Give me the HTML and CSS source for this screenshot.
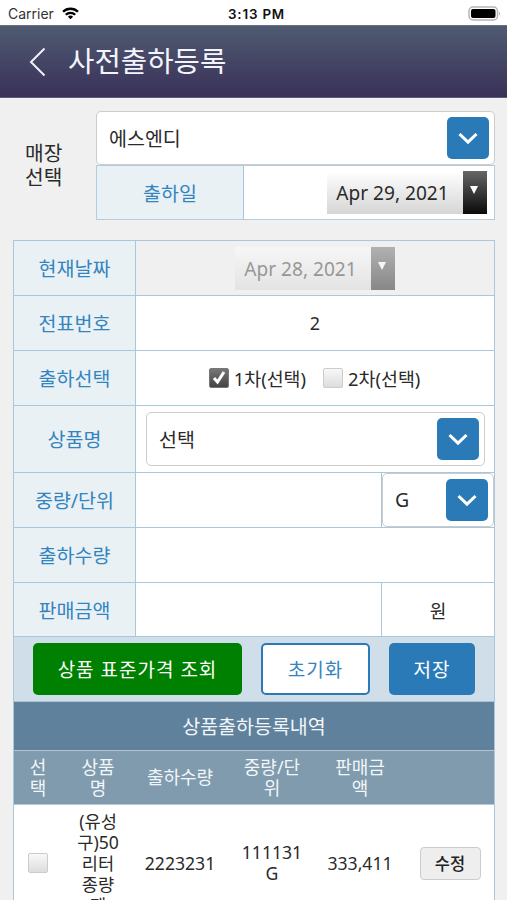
FILE: index.html
```html
<!DOCTYPE html>
<html lang="ko">
<head>
  <meta charset="utf-8">
  <title>사전출하등록</title>
  <link rel="stylesheet" href="styles.css">
</head>
<body>
  <div class="status-bar">
    <div class="carrier">
      Carrier
      <svg width="17" height="13" viewBox="0 0 17 13" fill="none" stroke="#000" stroke-width="2.3">
        <path d="M1 4.8a10.7 10.7 0 0 1 15 0"/>
        <path d="M3.8 7.8a6.6 6.6 0 0 1 9.4 0"/>
        <path d="M8.5 12.3 5.9 9.7a3.7 3.7 0 0 1 5.2 0Z" fill="#000" stroke="none"/>
      </svg>
    </div>
    <div class="time">3:13 PM</div>
    <div class="battery">
      <svg width="33" height="15" viewBox="0 0 33 15">
        <rect x="1" y="1" width="28.5" height="13" rx="4" fill="#fff" stroke="#b5b5b5" stroke-width="1.5"/>
        <rect x="3" y="3" width="24.5" height="9" rx="2" fill="#000"/>
        <path d="M31 5.2q1.6 2.3 0 4.6Z" fill="#999"/>
      </svg>
    </div>
  </div>

  <header class="header">
    <svg class="back" width="17" height="30" viewBox="0 0 17 30" fill="none" stroke="#f0f0fa" stroke-width="2">
      <path d="M15.500 1.500 2 15l13.500 13.500"/>
    </svg>
    <h1>사전출하등록</h1>
  </header>

  <section class="store">
    <div class="store-label">매장<br>선택</div>
    <div class="store-fields">
      <div class="select store-select">
        <span>에스엔디</span>
        <span class="arrow"><svg width="20" height="13" viewBox="0 0 20 13"><path d="m1.500 2 8.500 8.200L18.500 2"/></svg></span>
      </div>
      <div class="ship-date">
        <div class="label">출하일</div>
        <div class="value">
          <div class="date"><span class="date-text">Apr 29, 2021</span><span class="date-arrow"><i></i></span></div>
        </div>
      </div>
    </div>
  </section>

  <main class="panel">
    <div class="row">
      <div class="label">현재날짜</div>
      <div class="value disabled">
        <div class="date"><span class="date-text">Apr 28, 2021</span><span class="date-arrow"><i></i></span></div>
      </div>
    </div>
    <div class="row">
      <div class="label">전표번호</div>
      <div class="value">2</div>
    </div>
    <div class="row">
      <div class="label">출하선택</div>
      <div class="value checks">
        <span class="check checked"><svg width="14" height="15" viewBox="0 0 14 15"><path d="m2 8 3.500 4L12 2"/></svg></span>
        <span class="check-text">1차(선택)</span>
        <span class="check second"></span>
        <span class="check-text">2차(선택)</span>
      </div>
    </div>
    <div class="row product">
      <div class="label">상품명</div>
      <div class="value">
        <div class="select">
          <span>선택</span>
          <span class="arrow"><svg width="20" height="13" viewBox="0 0 20 13"><path d="m1.500 2 8.500 8.200L18.500 2"/></svg></span>
        </div>
      </div>
    </div>
    <div class="row weight">
      <div class="label">중량/단위</div>
      <div class="value"></div>
      <div class="unit">
        <div class="select">
          <span>G</span>
          <span class="arrow"><svg width="20" height="13" viewBox="0 0 20 13"><path d="m1.500 2 8.500 8.200L18.500 2"/></svg></span>
        </div>
      </div>
    </div>
    <div class="row">
      <div class="label">출하수량</div>
      <div class="value"></div>
    </div>
    <div class="row price">
      <div class="label">판매금액</div>
      <div class="value"></div>
      <div class="unit">원</div>
    </div>

    <div class="buttons">
      <button class="btn btn-green">상품 표준가격 조회</button>
      <button class="btn btn-white">초기화</button>
      <button class="btn btn-blue">저장</button>
    </div>

    <h2 class="list-title">상품출하등록내역</h2>
    <div class="list-row list-head">
      <div>선<br>택</div>
      <div>상품<br>명</div>
      <div>출하수량</div>
      <div>중량/단<br>위</div>
      <div>판매금<br>액</div>
      <div></div>
    </div>
    <div class="list-row list-item">
      <div><span class="check"></span></div>
      <div>(유성<br>구)50<br>리터<br>종량<br>제</div>
      <div>2223231</div>
      <div>111131<br>G</div>
      <div>333,411</div>
      <div><button class="edit">수정</button></div>
    </div>
  </main>
</body>
</html>
```
FILE: styles.css
```css
* {
  box-sizing: border-box;
}

body {
  margin: 0;
  width: 507px;
  height: 900px;
  overflow: hidden;
  background: #f0f0f0;
  color: #2a2a2a;
  font-family: "Noto Sans", "Noto Sans CJK KR", sans-serif;
  font-size: 18px;
}

.status-bar {
  display: grid;
  grid-template-columns: 1fr auto 1fr;
  align-items: center;
  height: 25px;
  padding: 2px 6px 0 8px;
  background: #fff;
  color: #111;
  font-family: Inter, sans-serif;
  font-size: 14px;
}

.carrier {
  display: flex;
  align-items: center;
  gap: 8px;
  color: #333;
}

.carrier svg {
  margin-top: -1px;
}

.time {
  margin-left: 4px;
  font-weight: 600;
  font-size: 13.4px;
  letter-spacing: 0.8px;
}

.battery {
  display: flex;
  justify-content: flex-end;
}

.header {
  display: flex;
  align-items: center;
  height: 73px;
  padding: 0 0 0 29px;
  background: linear-gradient(#4f5b71, #393058);
  border-top: 1px solid #677184;
  border-bottom: 1px solid #625a7b;
}

.header h1 {
  margin: -1px 0 0 22px;
  color: #f4f4fc;
  font-size: 28.7px;
  font-weight: 400;
  line-height: 40px;
}

.store {
  display: flex;
  height: 109px;
  margin: 13px 12px 20px 0;
}

.store-label {
  display: flex;
  align-items: center;
  width: 96px;
  padding: 0 0 1px 25px;
  font-size: 20.3px;
  line-height: 24px;
}

.store-fields {
  flex: 1;
}

.select {
  display: flex;
  align-items: center;
  justify-content: space-between;
  width: 100%;
  height: 54px;
  padding: 0 5px 0 12px;
  background: #fff;
  border: 1px solid #ccc;
  border-radius: 5px;
  font-size: 19.5px;
}

.select > span:first-child {
  padding-bottom: 1px;
}

.arrow {
  display: flex;
  align-items: center;
  justify-content: center;
  width: 42px;
  height: 42px;
  background: #2b7ab8;
  border-radius: 5px;
}

.arrow path {
  fill: none;
  stroke: #fff;
  stroke-width: 3;
}

.ship-date {
  display: flex;
  height: 55px;
  border: 1px solid #b1cddf;
}

.ship-date .label {
  width: 147px;
}

.ship-date .value {
  justify-content: flex-end;
  padding-right: 7px;
}

.label {
  display: flex;
  align-items: center;
  justify-content: center;
  flex: none;
  width: 122px;
  padding-bottom: 1px;
  background: #e9f1f5;
  border-right: 1px solid #a9c8dc;
  color: #3484bf;
  font-size: 19.5px;
}

.value {
  display: flex;
  align-items: center;
  justify-content: center;
  flex: 1;
  background: #fff;
}

.date {
  display: flex;
  height: 43px;
}

.date-text {
  width: 136px;
  padding-right: 5px;
  background: linear-gradient(#fff, #d5d5d5);
  font-size: 19.1px;
  line-height: 44px;
  text-align: center;
  white-space: nowrap;
}

.date-arrow {
  width: 24px;
  padding: 15px 0 0 7px;
  background: linear-gradient(#666, #0a0a0a);
}

.date-arrow i {
  display: block;
  width: 0;
  border: 4.5px solid transparent;
  border-top: 8px solid #fff;
  border-bottom: 0;
}

.disabled {
  background: #f0f0f0;
}

.disabled .date {
  opacity: 0.45;
}

.panel {
  margin: 0 12px 0 13px;
  border: 1px solid #a9c8dc;
  background: #fff;
}

.row {
  display: flex;
  height: 55px;
  border-bottom: 1px solid #a9c8dc;
}

.product {
  height: 67px;
}

.product .value {
  padding: 0 9px 0 10px;
}

.price {
  height: 54px;
}

.unit {
  display: flex;
  align-items: center;
  justify-content: center;
  width: 113px;
  border-left: 1px solid #a9c8dc;
}

.checks {
  padding: 0 1px 1px 0;
}

.check {
  display: inline-block;
  width: 20px;
  height: 20px;
  background: linear-gradient(#f8f8f8, #ddd);
  border: 1px solid #ccc;
  border-radius: 2px;
}

.checked {
  display: flex;
  align-items: center;
  justify-content: center;
  background: linear-gradient(#777, #444);
  border-color: #777;
}

.checked path {
  fill: none;
  stroke: #fff;
  stroke-width: 3;
}

.check-text {
  margin-left: 5px;
  font-size: 18.4px;
}

.second {
  margin-left: 17px;
}

.buttons {
  display: flex;
  align-items: center;
  height: 65px;
  padding-left: 19px;
  background: #d0dee9;
  border-bottom: 1px solid #a9c3d6;
}

.btn {
  height: 52px;
  margin-right: 19px;
  padding: 0;
  border: 0;
  border-radius: 5px;
  color: #fff;
  font-family: inherit;
  font-size: 19px;
  letter-spacing: 1px;
}

.btn-green {
  width: 209px;
  background: #008000;
}

.btn-white {
  width: 109px;
  background: #fff;
  border: 2px solid #2b7ab8;
  color: #3484bf;
}

.btn-blue {
  width: 86px;
  margin-right: 0;
  background: #2b7ab8;
}

.list-title {
  height: 49px;
  margin: 0;
  background: #5f819c;
  border-bottom: 1px solid #b1c6d4;
  color: #f2f6fa;
  font-size: 19.5px;
  font-weight: 400;
  line-height: 49px;
  text-align: center;
}

.list-row {
  display: grid;
  grid-template-columns: 48px 72px 92px 92px 84px 1fr;
  align-items: center;
  text-align: center;
  line-height: 21px;
}

.list-head {
  height: 54px;
  background: #7f9bad;
  border-bottom: 1px solid #b7cad6;
  color: #f2f6fa;
}

.list-item {
  height: 116px;
  font-size: 17.6px;
}

.list-item .check {
  margin-top: -3px;
  vertical-align: middle;
}

.edit {
  width: 61px;
  height: 33px;
  margin-left: 4px;
  padding: 0;
  background: #eee;
  border: 1px solid #ccc;
  border-radius: 4px;
  color: #222;
  font-family: inherit;
  font-size: 16.5px;
  font-weight: 500;
}
```
